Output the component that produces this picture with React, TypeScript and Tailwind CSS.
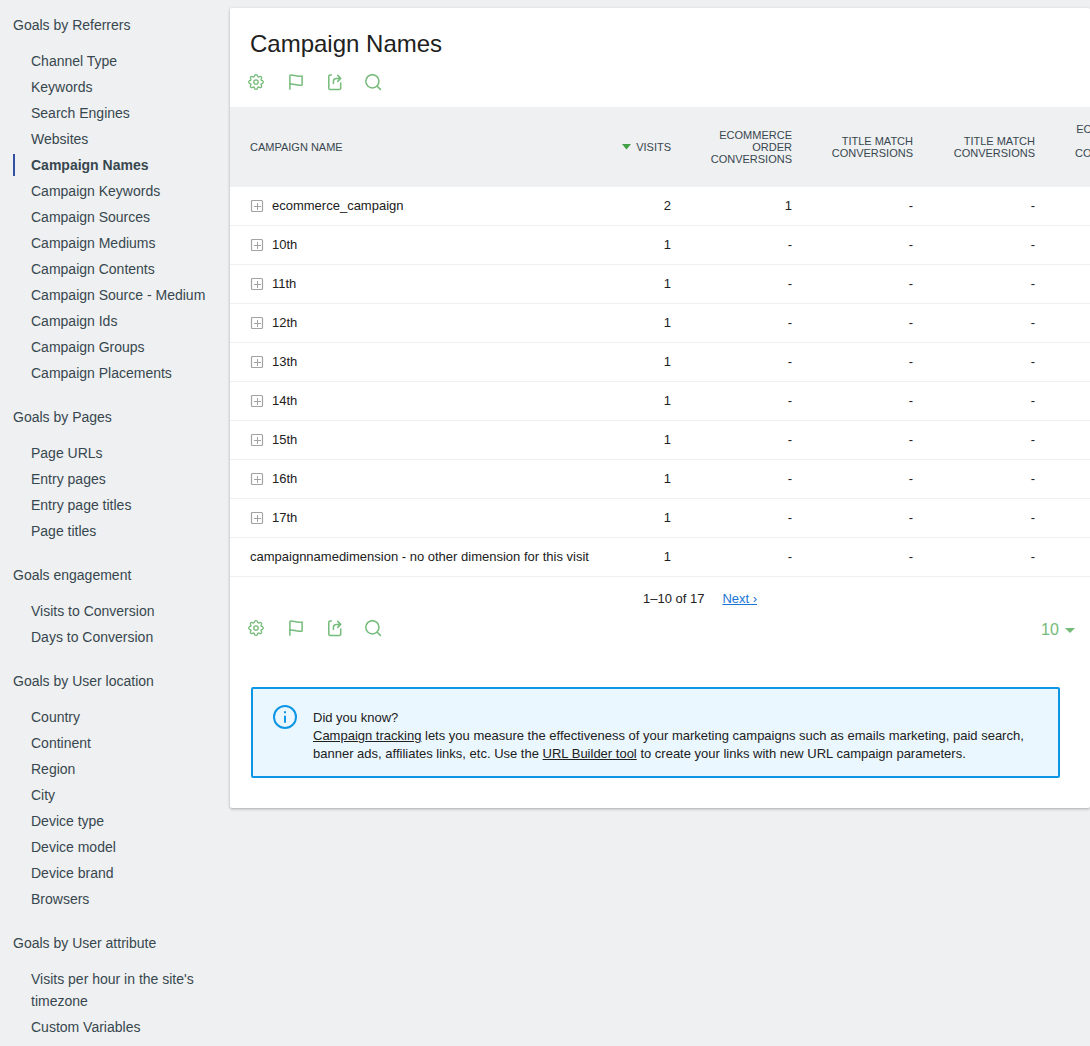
import { useId, type ReactNode } from "react";

const groups = [
  {
    title: "Goals by Referrers",
    items: [
      "Channel Type",
      "Keywords",
      "Search Engines",
      "Websites",
      "Campaign Names",
      "Campaign Keywords",
      "Campaign Sources",
      "Campaign Mediums",
      "Campaign Contents",
      "Campaign Source - Medium",
      "Campaign Ids",
      "Campaign Groups",
      "Campaign Placements",
    ],
  },
  { title: "Goals by Pages", items: ["Page URLs", "Entry pages", "Entry page titles", "Page titles"] },
  { title: "Goals engagement", items: ["Visits to Conversion", "Days to Conversion"] },
  {
    title: "Goals by User location",
    items: ["Country", "Continent", "Region", "City", "Device type", "Device model", "Device brand", "Browsers"],
  },
  { title: "Goals by User attribute", items: ["Visits per hour in the site's timezone", "Custom Variables"] },
];

const rows = [
  { name: "ecommerce_campaign", visits: 2, orders: "1", leaf: false },
  { name: "10th", visits: 1, orders: "-", leaf: false },
  { name: "11th", visits: 1, orders: "-", leaf: false },
  { name: "12th", visits: 1, orders: "-", leaf: false },
  { name: "13th", visits: 1, orders: "-", leaf: false },
  { name: "14th", visits: 1, orders: "-", leaf: false },
  { name: "15th", visits: 1, orders: "-", leaf: false },
  { name: "16th", visits: 1, orders: "-", leaf: false },
  { name: "17th", visits: 1, orders: "-", leaf: false },
  { name: "campaignnamedimension - no other dimension for this visit", visits: 1, orders: "-", leaf: true },
];

function Sidebar() {
  return (
    <nav aria-label="Goals" className="w-[230px] shrink-0 pt-3.5 pl-[13px] text-sm/[22px] text-[#37474f]">
      {groups.map((group) => (
        <section key={group.title} className="mb-[22px]">
          <h2 className="mb-3.5">{group.title}</h2>
          <ul className="flex flex-col gap-1">
            {group.items.map((item) => (
              <li key={item}>
                <a
                  href="#"
                  aria-current={item === "Campaign Names" ? "page" : undefined}
                  className={
                    item === "Campaign Names"
                      ? "block border-l-2 border-[#3450a3] pr-4 pl-4 font-bold"
                      : "block border-l-2 border-transparent pr-4 pl-4"
                  }
                >
                  {item}
                </a>
              </li>
            ))}
          </ul>
        </section>
      ))}
    </nav>
  );
}

function ToolButton({ label, children }: { label: string; children: ReactNode }) {
  return (
    <button type="button" aria-label={label} className="flex w-[39px] justify-center">
      <svg
        width="17"
        height="17"
        viewBox="0 0 17 17"
        fill="none"
        stroke="currentColor"
        strokeWidth="1.5"
        strokeLinecap="round"
        strokeLinejoin="round"
        aria-hidden="true"
      >
        {children}
      </svg>
    </button>
  );
}

function Toolbar() {
  return (
    <div className="flex pl-[7px] text-[#75bb79]">
      <ToolButton label="Settings">
        <g strokeWidth="1.3">
          <circle cx="8" cy="8" r="2.2" />
          <path d="M6.6 1.7Q6.8.7 8 .7T9.4 1.7Q9.8 3.7 11.5 2.6 12.4 2.1 13.2 2.8T13.4 4.5Q12.3 6.2 14.3 6.6 15.3 6.8 15.3 8T14.3 9.4Q12.3 9.8 13.4 11.5 13.9 12.4 13.2 13.2T11.5 13.4Q9.8 12.3 9.4 14.3 9.2 15.3 8 15.3T6.6 14.3Q6.2 12.3 4.5 13.4 3.6 13.9 2.8 13.2T2.6 11.5Q3.7 9.8 1.7 9.4.7 9.2.7 8T1.7 6.6Q3.7 6.2 2.6 4.5 2.1 3.6 2.8 2.8T4.5 2.6Q6.2 3.7 6.6 1.7Z" />
        </g>
      </ToolButton>
      <ToolButton label="Annotations">
        <path d="M2.9 15.3V1.3C5.6-.2 9.5 3.7 15.1 1.9V11C9.7 12.7 6.4 8.8 2.9 10.2" />
      </ToolButton>
      <ToolButton label="Export">
        <path d="M5.3 1.1H4a1.2 1.2 0 0 0-1.2 1.2v11.9A1.2 1.2 0 0 0 4 15.4h9.5a1.2 1.2 0 0 0 1.2-1.2V8.9" />
        <path d="M7.4 9.5V7.4a3 3 0 0 1 3-3h4M11.7 1.4l3 3-3 3" />
      </ToolButton>
      <ToolButton label="Search">
        <circle cx="7.4" cy="7.3" r="6.6" />
        <path d="m12.2 12.2 3.2 3.2" />
      </ToolButton>
    </div>
  );
}

function ExpandIcon() {
  return (
    <svg width="14" height="14" viewBox="0 0 14 14" fill="none" stroke="#a3a3a3" aria-hidden="true">
      <rect x="1.5" y="1.5" width="11" height="11" rx="1" strokeWidth="1.2" />
      <path d="M7.5 4v7M4 7.5h7" />
    </svg>
  );
}

function CampaignTable() {
  return (
    <div className="mt-4 overflow-hidden">
      <table className="w-[931px] table-fixed border-separate border-spacing-0 text-right text-[13px]/[18px]">
        <colgroup>
          <col />
          <col className="w-[73px]" />
          <col className="w-[121px]" />
          <col className="w-[121px]" />
          <col className="w-[122px]" />
          <col className="w-[114px]" />
        </colgroup>
        <thead className="bg-[#eff0f1] text-[11px]/3 text-[#37474f] uppercase">
          <tr className="h-20">
            <th scope="col" className="pl-5 text-left font-normal">
              Campaign Name
            </th>
            <th scope="col" aria-sort="descending" className="px-3 font-normal">
              <span className="flex items-center justify-end gap-[5px]">
                <svg width="9" height="6" viewBox="0 0 9 6" fill="#43a047" aria-hidden="true">
                  <path d="M0 0h9L4.5 5.5Z" />
                </svg>
                Visits
              </span>
            </th>
            <th scope="col" className="px-3 font-normal">Ecommerce Order Conversions</th>
            <th scope="col" className="px-3 font-normal">Title Match Conversions</th>
            <th scope="col" className="px-3 font-normal">Title Match Conversions</th>
            <th scope="col" className="px-3 font-normal">Ecommerce Order Conversion Rate</th>
          </tr>
        </thead>
        <tbody>
          {rows.map((row) => (
            <tr key={row.name} className="h-[39px] *:border-b *:border-[#eeeff1]">
              <td className="pl-5 text-left">
                {row.leaf ? (
                  row.name
                ) : (
                  <button type="button" className="flex items-center gap-2">
                    <ExpandIcon />
                    {row.name}
                  </button>
                )}
              </td>
              <td className="px-3">{row.visits}</td>
              <td className="px-3">{row.orders}</td>
              <td className="px-3">-</td>
              <td className="px-3">-</td>
              <td className="px-3">-</td>
            </tr>
          ))}
        </tbody>
      </table>
    </div>
  );
}

function Pager() {
  return (
    <div className="mt-[13px] flex justify-center gap-[18px] pl-20 text-[13px]/[18px]">
      <span>1–10 of 17</span>
      <a href="#" className="text-[#1976d2] underline">
        Next ›
      </a>
    </div>
  );
}

function RowLimit() {
  const id = useId();
  return (
    <div className="flex items-center gap-1.5 pr-[15px] text-[#75bb79]">
      <label htmlFor={id} className="sr-only">
        Rows to display
      </label>
      <select id={id} defaultValue="10" className="w-[18px] appearance-none bg-transparent text-base/5">
        <option>5</option>
        <option>10</option>
        <option>25</option>
      </select>
      <svg width="10" height="5" viewBox="0 0 10 5" fill="currentColor" aria-hidden="true">
        <path d="M0 0h10L5 5Z" />
      </svg>
    </div>
  );
}

function Tip() {
  return (
    <aside className="mt-[47px] mr-[30px] mb-[30px] ml-[21px] flex gap-4 rounded-xs border-2 border-[#0d96e6] bg-[#ebf7fe] px-5 pt-5 pb-[13px] text-[13px]/[18px]">
      <svg width="24" height="24" viewBox="0 0 24 24" className="-mt-1 shrink-0" aria-hidden="true">
        <circle cx="12" cy="12" r="11" fill="none" stroke="#0d96e6" strokeWidth="2" />
        <path d="M11 6.3h2v2h-2zM11 10.8h2v7h-2z" fill="#0d96e6" />
      </svg>
      <div>
        <p>Did you know?</p>
        <p>
          <a href="#" className="underline">Campaign tracking</a> lets you measure the effectiveness of your
          marketing campaigns such as emails marketing, paid search, banner ads, affiliates links, etc. Use the{" "}
          <a href="#" className="underline">URL Builder tool</a> to create your links with new URL campaign
          parameters.
        </p>
      </div>
    </aside>
  );
}

export default function App() {
  return (
    <div className="flex min-h-screen items-start bg-[#eff0f1] font-['Liberation_Sans',Arial,sans-serif] text-[#212121]">
      <Sidebar />
      <main className="mt-2 min-w-0 flex-1 rounded-xs bg-white shadow-[0_1px_3px_rgba(0,0,0,0.3)]">
        <h1 className="pt-5 pb-[14px] pl-5 text-2xl/8">Campaign Names</h1>
        <Toolbar />
        <CampaignTable />
        <Pager />
        <div className="mt-3 flex items-start justify-between">
          <Toolbar />
          <RowLimit />
        </div>
        <Tip />
      </main>
    </div>
  );
}
